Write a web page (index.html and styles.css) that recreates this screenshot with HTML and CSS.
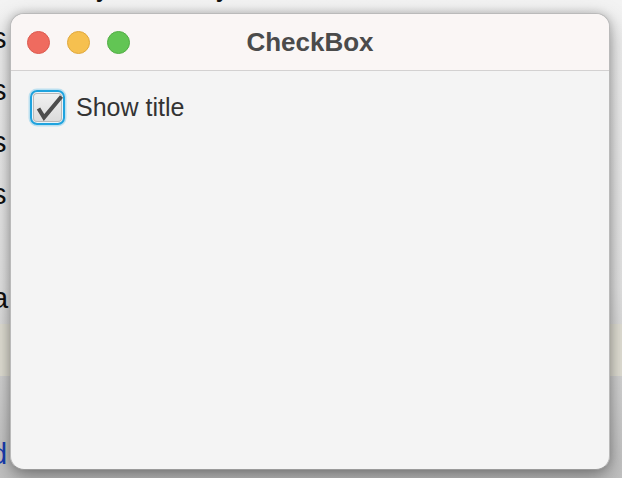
FILE: index.html
```html
<!DOCTYPE html>
<html>
<head>
<meta charset="utf-8">
<link rel="stylesheet" href="styles.css">
</head>
<body>
<div class="page">
  <div class="topline"><span class="y1">y</span><span class="y2">y</span></div>
  <div class="line">s</div>
  <div class="line">s</div>
  <div class="line">s</div>
  <div class="line">s</div>
  <div class="line empty"></div>
  <div class="line">a</div>
  <div class="line band"></div>
  <div class="line empty"></div>
  <div class="line link">d</div>
</div>

<div class="window">
  <div class="titlebar">
    <div class="lights">
      <span class="light red"></span>
      <span class="light yellow"></span>
      <span class="light green"></span>
    </div>
    <div class="title">CheckBox</div>
  </div>
  <div class="content">
    <label class="check">
      <span class="box">
        <svg class="tick" width="35" height="35" viewBox="0 0 35 35">
          <path d="M8.5 18.5 L14 27.5 L31.5 6.5" fill="none" stroke="#4d4d4d" stroke-width="4" stroke-linecap="butt" stroke-linejoin="miter"/>
        </svg>
      </span>
      <span class="label">Show title</span>
    </label>
  </div>
</div>
</body>
</html>
```

FILE: styles.css
```css
html, body {
  margin: 0;
  padding: 0;
}
body {
  width: 622px;
  height: 478px;
  overflow: hidden;
  position: relative;
  background: linear-gradient(to bottom, #f3f3f3 0%, #e6e6e6 60%, #c2c2c2 100%);
  font-family: "Liberation Sans", Arial, sans-serif;
}
.page {
  display: flex;
  flex-direction: column;
  font-size: 29px;
  color: #111;
}
.topline {
  height: 12px;
  position: relative;
  overflow: hidden;
}
.topline span {
  position: absolute;
  top: -28px;
  line-height: 29px;
}
.y1 { left: 96px; }
.y2 { left: 216px; }
.line {
  height: 52px;
  line-height: 52px;
  margin-left: -8px;
  flex: none;
}
.band {
  background: #e4e2d7;
  margin-left: 0;
}
.link {
  color: #1a3fb5;
  margin-left: -9px;
}
.window {
  position: absolute;
  left: 10px;
  top: 13px;
  width: 598px;
  height: 455px;
  border: 1px solid #bababa;
  border-bottom-color: #9a9a9a;
  border-radius: 14px;
  background: #f4f4f4;
  overflow: hidden;
  box-shadow: 0 8px 22px rgba(0,0,0,0.35), 0 0 8px rgba(0,0,0,0.18);
  display: flex;
  flex-direction: column;
}
.titlebar {
  height: 56px;
  flex: none;
  background: #faf6f5;
  border-bottom: 1px solid #d3d1d1;
  position: relative;
  display: flex;
  align-items: center;
  justify-content: center;
}
.lights {
  position: absolute;
  left: 16px;
  top: 17px;
  display: flex;
  gap: 17px;
}
.light {
  width: 23px;
  height: 23px;
  border-radius: 50%;
  box-sizing: border-box;
}
.red { background: #ef6b5f; border: 1px solid #dc5a4f; }
.yellow { background: #f6c04f; border: 1px solid #e0a83c; }
.green { background: #62c554; border: 1px solid #52ad45; }
.title {
  font-size: 26px;
  font-weight: bold;
  color: #4b4b4b;
}
.content {
  padding: 19px 19px;
}
.check {
  display: flex;
  align-items: center;
  gap: 11px;
}
.box {
  position: relative;
  width: 35px;
  height: 35px;
  box-sizing: border-box;
  border: 2.5px solid #1fa3de;
  border-radius: 7px;
  box-shadow: 0 0 0 1.5px rgba(120,200,235,0.45), inset 0 0 0 1px #e9f4fa, inset 0 0 0 2px #b9b9b9;
  background: linear-gradient(to bottom, #f2f2f2, #dadada);
}
.tick {
  position: absolute;
  left: -2.5px;
  top: -2.5px;
}
.label {
  font-size: 25px;
  color: #333;
}
```
